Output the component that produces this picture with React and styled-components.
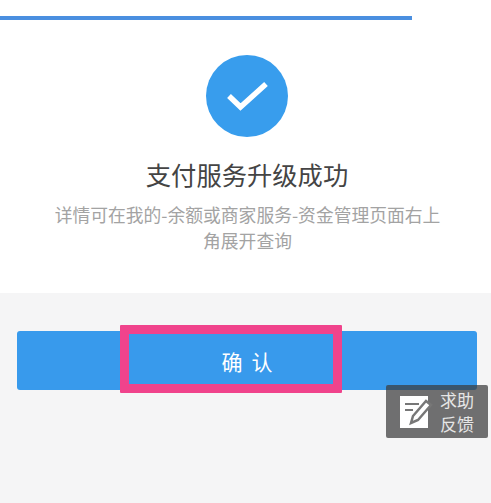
import React from 'react';
import styled, { createGlobalStyle } from 'styled-components';

const GlobalStyle = createGlobalStyle`
  html, body {
    margin: 0;
    padding: 0;
    background: #fff;
    font-family: "Noto Sans CJK SC", "Liberation Sans", sans-serif;
  }
`;

const Screen = styled.div`
  position: relative;
  width: 491px;
  height: 503px;
  overflow: hidden;
  display: flex;
  flex-direction: column;
`;

const Result = styled.div`
  height: 293px;
  padding-top: 16px;
  box-sizing: border-box;
  background: #fff;
  display: flex;
  flex-direction: column;
  align-items: center;
`;

const Progress = styled.div`
  align-self: flex-start;
  width: 412px;
  height: 4px;
  background: #4a8fe0;
`;

const CheckCircle = styled.div`
  width: 82px;
  height: 82px;
  margin-top: 35px;
  margin-left: 3px;
  border-radius: 50%;
  background: #389ded;
  display: flex;
  align-items: center;
  justify-content: center;
`;

const Title = styled.h1`
  margin: 19px 0 0 3px;
  font-size: 25.3px;
  line-height: 36px;
  font-weight: 400;
  color: #444;
`;

const Desc = styled.p`
  margin: 9px 0 0 4px;
  width: 392px;
  font-size: 17.8px;
  line-height: 26px;
  text-align: center;
  color: #a3a3a3;
`;

const Footer = styled.div`
  flex: 1;
  background: #f5f5f6;
  padding: 38px 14px 0 17px;
`;

const ConfirmButton = styled.button`
  display: block;
  width: 100%;
  height: 59px;
  border: 0;
  border-radius: 3px;
  padding: 0 0 0 9px;
  background: #389aec;
  color: #fff;
  font-family: inherit;
  font-size: 21px;
  letter-spacing: 9px;
`;

const Highlight = styled.div`
  position: absolute;
  left: 120px;
  top: 325px;
  width: 222px;
  height: 68px;
  box-sizing: border-box;
  border: 9px solid #f0438c;
  border-radius: 1px;
`;

const HelpBadge = styled.div`
  position: absolute;
  left: 386px;
  top: 385px;
  width: 102px;
  height: 53px;
  box-sizing: border-box;
  padding-left: 14px;
  border-radius: 2px;
  background: rgba(60, 60, 60, 0.72);
  display: flex;
  align-items: center;
  gap: 7px;
`;

const HelpText = styled.div`
  font-size: 17px;
  line-height: 24px;
  color: #e6e6e6;
`;

const NoteIcon = () => (
  <svg width="33" height="34" viewBox="0 0 33 34">
    <rect x="0" y="1" width="28" height="32" fill="#fff" />
    <path d="M5 9h14M5 15h8" stroke="#777" strokeWidth="2" fill="none" />
    <path d="M26 6l5 4L18 25l-7 3 2-7z" fill="#fff" stroke="#777" strokeWidth="2.500" />
  </svg>
);

const App = () => (
  <Screen>
    <GlobalStyle />
    <Result>
      <Progress />
      <CheckCircle>
        <svg width="42" height="32" viewBox="0 0 42 32">
          <path d="M3 16l11.500 11L40 4" fill="none" stroke="#fff" strokeWidth="5.500" />
        </svg>
      </CheckCircle>
      <Title>支付服务升级成功</Title>
      <Desc>详情可在我的-余额或商家服务-资金管理页面右上角展开查询</Desc>
    </Result>
    <Footer>
      <ConfirmButton>确认</ConfirmButton>
    </Footer>
    <Highlight />
    <HelpBadge>
      <NoteIcon />
      <HelpText>求助<br />反馈</HelpText>
    </HelpBadge>
  </Screen>
);

export default App;
